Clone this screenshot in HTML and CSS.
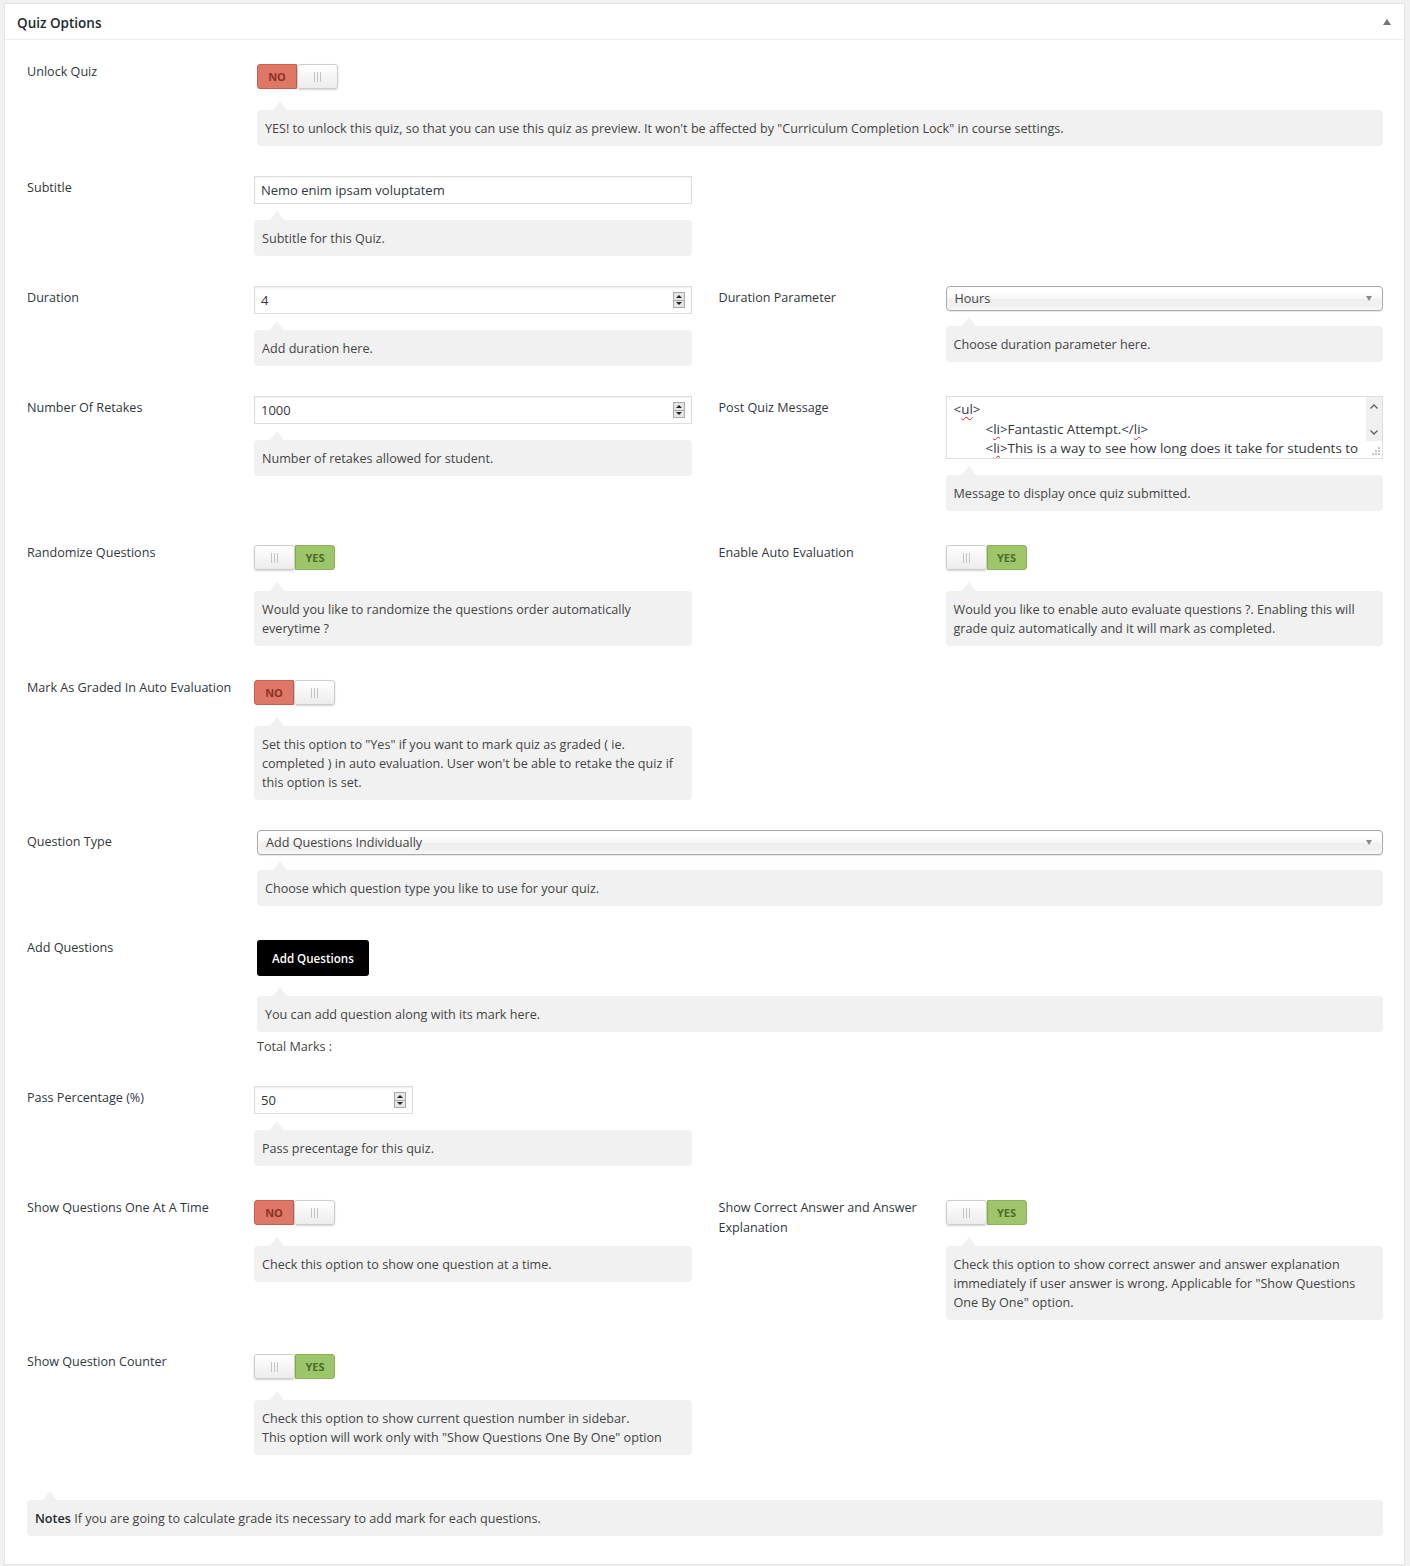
FILE: index.html
```html
<!DOCTYPE html>
<html lang="en">
<head>
  <meta charset="UTF-8">
  <title>Quiz Options</title>
  <link rel="stylesheet" href="styles.css">
</head>
<body>

<div class="postbox">
  <div class="postbox-header">
    <h2>Quiz Options</h2>
    <span class="toggle-indicator"></span>
  </div>

  <div class="inside">

    <!-- Unlock -->
    <div class="opt-row">
      <div class="opt-field opt-field-full">
        <label class="opt-label">Unlock Quiz</label>
        <div class="opt-control">
          <span class="switch is-off"><span class="switch-text">NO</span><span class="switch-handle"></span></span>
          <div class="help">YES! to unlock this quiz, so that you can use this quiz as preview. It won't be affected by "Curriculum Completion Lock" in course settings.</div>
        </div>
      </div>
    </div>

    <!-- Subtitle -->
    <div class="opt-row">
      <div class="opt-field">
        <label class="opt-label">Subtitle</label>
        <div class="opt-control">
          <input class="text-input" type="text" value="Nemo enim ipsam voluptatem">
          <div class="help">Subtitle for this Quiz.</div>
        </div>
      </div>
    </div>

    <!-- Duration -->
    <div class="opt-row">
      <div class="opt-field">
        <label class="opt-label">Duration</label>
        <div class="opt-control">
          <div class="num">
            <input class="text-input" type="text" value="4">
            <span class="spin"><span class="up"></span><span class="down"></span></span>
          </div>
          <div class="help">Add duration here.</div>
        </div>
      </div>
      <div class="opt-field">
        <label class="opt-label">Duration Parameter</label>
        <div class="opt-control">
          <div class="select">Hours</div>
          <div class="help">Choose duration parameter here.</div>
        </div>
      </div>
    </div>

    <!-- Retakes / message -->
    <div class="opt-row">
      <div class="opt-field">
        <label class="opt-label">Number Of Retakes</label>
        <div class="opt-control">
          <div class="num">
            <input class="text-input" type="text" value="1000">
            <span class="spin"><span class="up"></span><span class="down"></span></span>
          </div>
          <div class="help">Number of retakes allowed for student.</div>
        </div>
      </div>
      <div class="opt-field">
        <label class="opt-label">Post Quiz Message</label>
        <div class="opt-control">
          <div class="editor">
            <div class="editor-text">
              <div>&lt;<span class="typo">ul</span>&gt;</div>
              <div class="indent">&lt;<span class="typo">li</span>&gt;Fantastic Attempt.&lt;/<span class="typo">li</span>&gt;</div>
              <div class="indent">&lt;<span class="typo">li</span>&gt;This is a way to see how long does it take for students to</div>
            </div>
            <div class="editor-scroll">
              <div class="scroll-track">
                <svg width="8" height="5" viewBox="0 0 8 5"><polyline points="0.5,4.5 4,1 7.5,4.5" fill="none" stroke="#606060" stroke-width="1.4"/></svg>
                <svg width="8" height="5" viewBox="0 0 8 5"><polyline points="0.5,0.5 4,4 7.5,0.5" fill="none" stroke="#606060" stroke-width="1.4"/></svg>
              </div>
              <svg class="grip" width="8" height="8" viewBox="0 0 8 8">
                <rect x="6" y="0" width="2" height="2" fill="#c4c4c4"/>
                <rect x="3" y="3" width="2" height="2" fill="#c4c4c4"/>
                <rect x="6" y="3" width="2" height="2" fill="#c4c4c4"/>
                <rect x="0" y="6" width="2" height="2" fill="#c4c4c4"/>
                <rect x="3" y="6" width="2" height="2" fill="#c4c4c4"/>
                <rect x="6" y="6" width="2" height="2" fill="#c4c4c4"/>
              </svg>
            </div>
          </div>
          <div class="help">Message to display once quiz submitted.</div>
        </div>
      </div>
    </div>

    <!-- Randomize / auto evaluation -->
    <div class="opt-row">
      <div class="opt-field">
        <label class="opt-label">Randomize Questions</label>
        <div class="opt-control">
          <span class="switch is-on"><span class="switch-handle"></span><span class="switch-text">YES</span></span>
          <div class="help">Would you like to randomize the questions order automatically everytime ?</div>
        </div>
      </div>
      <div class="opt-field">
        <label class="opt-label">Enable Auto Evaluation</label>
        <div class="opt-control">
          <span class="switch is-on"><span class="switch-handle"></span><span class="switch-text">YES</span></span>
          <div class="help">Would you like to enable auto evaluate questions ?. Enabling this will grade quiz automatically and it will mark as completed.</div>
        </div>
      </div>
    </div>

    <!-- Mark as graded -->
    <div class="opt-row">
      <div class="opt-field">
        <label class="opt-label">Mark As Graded In Auto Evaluation</label>
        <div class="opt-control">
          <span class="switch is-off"><span class="switch-text">NO</span><span class="switch-handle"></span></span>
          <div class="help">Set this option to "Yes" if you want to mark quiz as graded ( ie. completed ) in auto evaluation. User won't be able to retake the quiz if this option is set.</div>
        </div>
      </div>
    </div>

    <!-- Question type -->
    <div class="opt-row">
      <div class="opt-field opt-field-full">
        <label class="opt-label">Question Type</label>
        <div class="opt-control">
          <div class="select">Add Questions Individually</div>
          <div class="help">Choose which question type you like to use for your quiz.</div>
        </div>
      </div>
    </div>

    <!-- Add questions -->
    <div class="opt-row">
      <div class="opt-field opt-field-full">
        <label class="opt-label">Add Questions</label>
        <div class="opt-control">
          <a class="btn-dark">Add Questions</a>
          <div class="help">You can add question along with its mark here.</div>
          <div class="total-marks">Total Marks : </div>
        </div>
      </div>
    </div>

    <!-- Pass percentage -->
    <div class="opt-row">
      <div class="opt-field">
        <label class="opt-label">Pass Percentage (%)</label>
        <div class="opt-control">
          <div class="num num-short">
            <input class="text-input" type="text" value="50">
            <span class="spin"><span class="up"></span><span class="down"></span></span>
          </div>
          <div class="help">Pass precentage for this quiz.</div>
        </div>
      </div>
    </div>

    <!-- One at a time / correct answer -->
    <div class="opt-row">
      <div class="opt-field">
        <label class="opt-label">Show Questions One At A Time</label>
        <div class="opt-control">
          <span class="switch is-off"><span class="switch-text">NO</span><span class="switch-handle"></span></span>
          <div class="help">Check this option to show one question at a time.</div>
        </div>
      </div>
      <div class="opt-field">
        <label class="opt-label">Show Correct Answer and Answer Explanation</label>
        <div class="opt-control">
          <span class="switch is-on"><span class="switch-handle"></span><span class="switch-text">YES</span></span>
          <div class="help">Check this option to show correct answer and answer explanation immediately if user answer is wrong. Applicable for "Show Questions One By One" option.</div>
        </div>
      </div>
    </div>

    <!-- Counter -->
    <div class="opt-row">
      <div class="opt-field">
        <label class="opt-label">Show Question Counter</label>
        <div class="opt-control">
          <span class="switch is-on"><span class="switch-handle"></span><span class="switch-text">YES</span></span>
          <div class="help">Check this option to show current question number in sidebar.<br>This option will work only with "Show Questions One By One" option</div>
        </div>
      </div>
    </div>

    <div class="help notes"><strong>Notes</strong> If you are going to calculate grade its necessary to add mark for each questions.</div>

  </div>
</div>

</body>
</html>
```

FILE: styles.css
```css
/* Page */
body {
  margin: 0;
  background: #f1f1f1;
  font-family: "Open Sans", "Noto Sans", sans-serif;
  font-size: 12.6px;
  color: #32373c;
}

.postbox {
  margin: 3px 5px 0 4px;
  background: #fff;
  border: 1px solid #e5e5e5;
  box-shadow: 0 1px 1px rgba(0, 0, 0, 0.04);
}

.postbox-header {
  display: flex;
  align-items: center;
  justify-content: space-between;
  height: 35px;
  padding: 0 13px 0 12px;
  border-bottom: 1px solid #eee;
}

.postbox-header h2 {
  margin: 0;
  padding-top: 2px;
  font-size: 13.5px;
  font-weight: 600;
  color: #23282d;
}

.toggle-indicator {
  width: 0;
  height: 0;
  border-left: 4px solid transparent;
  border-right: 4px solid transparent;
  border-bottom: 6px solid #72777c;
}

.inside {
  padding: 20px 21px 28px 22px;
}

/* Rows */
.opt-row {
  display: grid;
  grid-template-columns: 1fr 1fr;
  column-gap: 27px;
  margin-bottom: 30px;
}

.opt-field {
  display: flex;
  align-items: flex-start;
}

.opt-field-full {
  grid-column: 1 / -1;
}

.opt-label {
  flex: 0 0 227px;
  box-sizing: border-box;
  padding: 2px 16px 0 0;
  line-height: 19.5px;
  color: #32373c;
}

.opt-control {
  flex: 1;
  min-width: 0;
}

.opt-field-full .opt-control {
  padding-left: 3px;
}

/* Help bubbles */
.help {
  position: relative;
  margin-top: 16px;
  padding: 9px 8px 8px;
  background: #f1f1f1;
  border-radius: 4px;
  line-height: 19px;
  color: #444;
}

.help::before {
  content: "";
  position: absolute;
  left: 16px;
  top: -9px;
  border-left: 7px solid transparent;
  border-right: 7px solid transparent;
  border-bottom: 9px solid #f1f1f1;
}

.notes {
  margin-top: 45px;
}

.notes strong {
  font-weight: 600;
  color: #23282d;
}

/* Inputs */
.text-input {
  display: block;
  width: 100%;
  height: 28px;
  box-sizing: border-box;
  margin: 0;
  padding: 0 6px;
  border: 1px solid #ddd;
  box-shadow: inset 0 1px 2px rgba(0, 0, 0, 0.07);
  font-family: inherit;
  font-size: 13px;
  color: #32373c;
  outline: none;
}

.num {
  position: relative;
}

.num-short {
  width: 159px;
}

.spin {
  position: absolute;
  right: 7px;
  top: 6px;
  width: 12px;
  height: 16px;
  box-sizing: border-box;
  border: 1px solid #a9a9a9;
  background: #e6e6e6;
  display: flex;
  flex-direction: column;
}

.spin span {
  flex: 1;
  display: flex;
  align-items: center;
  justify-content: center;
}

.spin .down {
  border-top: 1px solid #a9a9a9;
}

.spin .up::before {
  content: "";
  border-left: 3px solid transparent;
  border-right: 3px solid transparent;
  border-bottom: 3px solid #222;
}

.spin .down::before {
  content: "";
  border-left: 3px solid transparent;
  border-right: 3px solid transparent;
  border-top: 3px solid #222;
}

/* Chosen style select */
.select {
  display: flex;
  align-items: center;
  justify-content: space-between;
  height: 25px;
  box-sizing: border-box;
  padding: 0 10px 0 8px;
  border: 1px solid #aaa;
  border-radius: 4px;
  background: linear-gradient(#fff 20%, #f6f6f6 50%, #eee 52%, #f4f4f4 100%);
  box-shadow: inset 0 0 3px #fff, 0 1px 1px rgba(0, 0, 0, 0.1);
  color: #444;
}

.select::after {
  content: "";
  border-left: 3.5px solid transparent;
  border-right: 3.5px solid transparent;
  border-top: 5px solid #8a8a8a;
}

.select + .help {
  margin-top: 15px;
}

/* Textarea look-alike */
.editor {
  display: flex;
  height: 63px;
  box-sizing: border-box;
  border: 1px solid #ddd;
}

.editor-text {
  flex: 1;
  overflow: hidden;
  padding: 3px 7px 0;
  font-size: 13.4px;
  line-height: 19.5px;
  white-space: nowrap;
  color: #32373c;
}

.editor-text .indent {
  padding-left: 32px;
}

.typo {
  text-decoration: underline wavy #e02020;
  text-decoration-thickness: 1px;
  text-underline-offset: 2px;
}

.editor-scroll {
  width: 16px;
  display: flex;
  flex-direction: column;
  align-items: center;
}

.scroll-track {
  align-self: stretch;
  height: 44px;
  box-sizing: border-box;
  padding: 7px 0 6px;
  background: #f0f0f0;
  display: flex;
  flex-direction: column;
  justify-content: space-between;
  align-items: center;
}

.grip {
  margin: 6px 0 0 4px;
}

/* Toggle switch */
.switch {
  display: flex;
  width: 81px;
  height: 25px;
  margin-top: 4px;
}

.switch + .help {
  margin-top: 21px;
}

.switch-text {
  width: 40px;
  box-sizing: border-box;
  display: flex;
  align-items: center;
  justify-content: center;
  border: 1px solid;
  font-size: 11px;
  font-weight: 700;
}

.is-off .switch-text {
  background: #de7766;
  border-color: #c9604f;
  color: #8b3328;
  border-radius: 3px 0 0 3px;
}

.is-on .switch-text {
  background: #9dc66a;
  border-color: #8ab257;
  color: #4d6b2b;
  border-radius: 0 3px 3px 0;
}

.switch-handle {
  position: relative;
  width: 41px;
  box-sizing: border-box;
  border: 1px solid #ccc;
  border-radius: 3px;
  background: linear-gradient(#fff, #ececec);
  box-shadow: 0 1px 2px rgba(0, 0, 0, 0.18);
}

.switch-handle::before {
  content: "";
  position: absolute;
  left: 16px;
  top: 7px;
  width: 7px;
  height: 10px;
  background: linear-gradient(to right, #c4c4c4 1px, transparent 1px) 0 0 / 3px 100% repeat-x;
}

/* Button */
.btn-dark {
  display: flex;
  align-items: center;
  width: max-content;
  height: 36px;
  margin-top: 4px;
  padding: 0 15px;
  background: #000;
  color: #fff;
  border-radius: 3px;
  font-size: 11.6px;
  font-weight: 600;
  cursor: pointer;
}

.btn-dark + .help {
  margin-top: 20px;
}

.total-marks {
  margin-top: 5px;
  line-height: 19px;
  color: #444;
}
```
